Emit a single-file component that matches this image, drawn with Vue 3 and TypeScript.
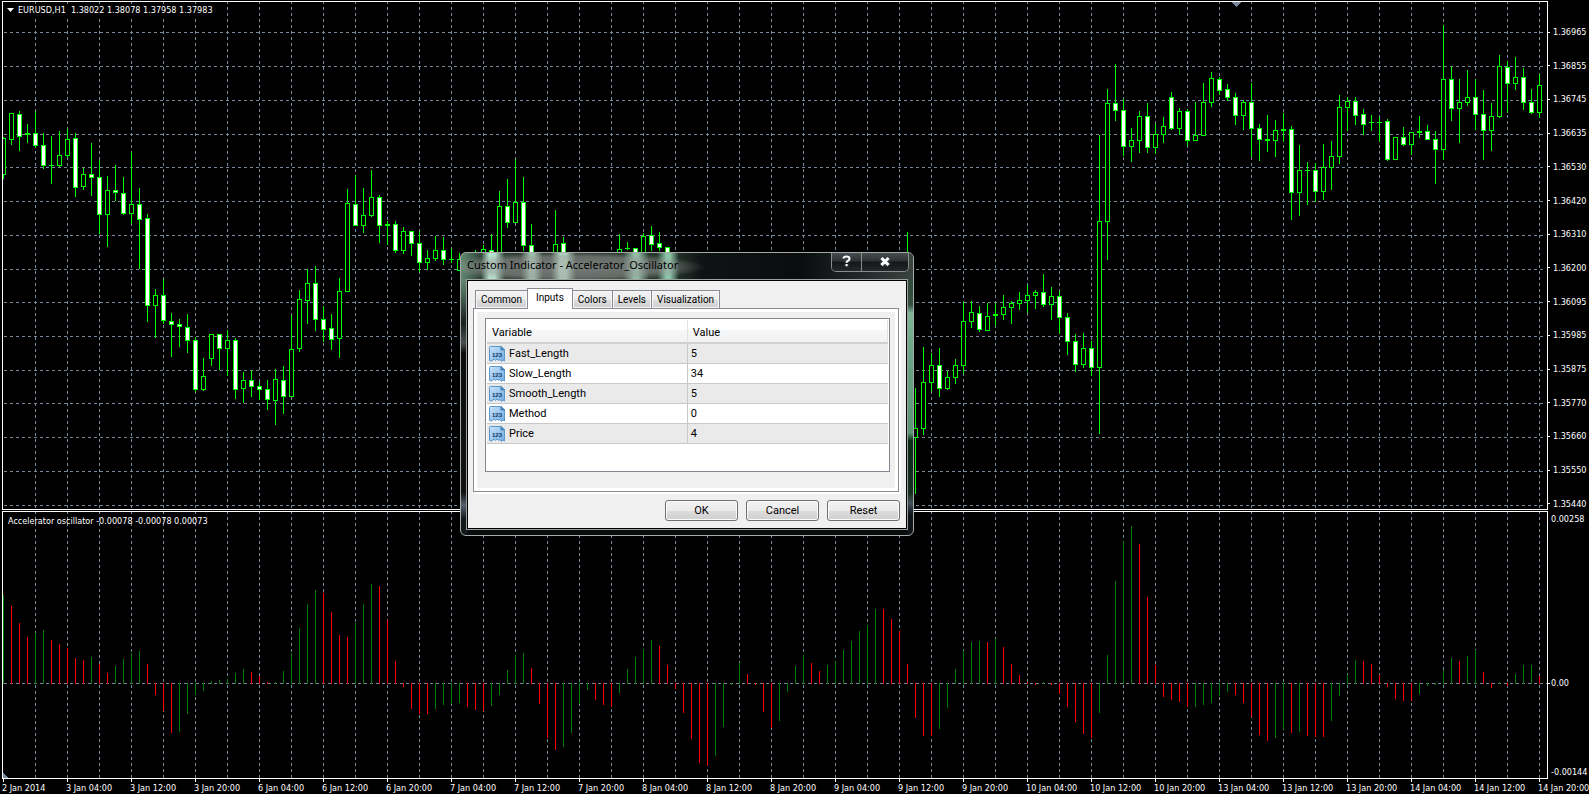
<script setup lang="ts">
import { ref } from 'vue'

type Kind = 'h' | 'w'
interface Candle { x: number; high: number; low: number; top: number; bottom: number; kind: Kind }
interface Bar { x: number; y: number; height: number; up: boolean }

const STEP = 8
const ORIGIN = 3
const ZERO = 683

// index high low bodyTop bodyBottom kind (h = hollow, w = filled)
const candleSource = `
0 137 178 138 174 h;1 113 144 113 139 h;2 111 150 114 136 w;3 124 142 133 134 h;4 111 147 133 145 w;5 133 168 145 165 w
6 136 183 165 165 h;7 131 166 155 165 h;8 129 157 139 155 h;9 133 196 138 187 w;10 168 189 174 186 h;11 143 195 174 177 w
12 160 233 177 214 w;13 176 246 190 214 h;14 165 200 190 192 w;15 177 214 193 213 w;16 152 223 204 213 h;17 188 268 204 219 w
18 214 321 218 305 w;19 289 337 295 305 h;20 279 323 295 320 w;21 313 356 321 324 w;22 319 346 324 326 w;23 314 352 327 340 w
24 337 391 340 389 w;25 358 390 376 389 h;26 334 365 334 358 h;27 334 369 334 348 w;28 330 375 340 348 h;29 338 398 340 389 w
30 372 402 380 388 h;31 370 396 380 386 w;32 382 399 386 389 w;33 380 409 389 399 w;34 369 424 379 400 h;35 366 413 380 396 w
36 315 396 349 396 h;37 290 351 299 348 h;38 269 323 283 300 h;39 266 330 283 319 w;40 306 341 319 329 w;41 314 349 328 339 w
42 278 357 291 338 h;43 189 291 203 291 h;44 175 225 204 225 w;45 188 232 215 225 h;46 170 216 197 215 h;47 195 242 197 225 w
48 221 244 224 225 h;49 221 252 224 250 w;50 227 253 231 250 h;51 231 255 231 243 w;52 231 271 243 262 w;53 250 269 258 262 h
54 236 260 250 258 h;55 237 264 250 259 w;56 249 262 259 259 h;57 253 270 259 270 h;59 250 270 254 266 w;60 245 270 249 262 h
61 234 270 250 264 w;62 191 270 206 266 h;63 179 227 206 222 w;64 159 222 202 222 h;65 177 250 202 245 w;66 224 270 245 262 w
69 210 270 244 262 h;70 237 270 243 268 w;77 234 270 249 262 h;78 242 249 248 248 h;79 248 270 248 266 w;80 233 270 236 260 h
81 226 250 235 244 w;82 232 250 243 247 w;83 247 270 247 268 w;113 232 270 300 400 h;114 388 493 428 437 h;115 347 434 382 428 h
116 353 390 365 382 h;117 348 396 365 388 w;118 371 389 377 388 h;119 359 383 365 377 h;120 302 373 321 365 h;121 301 327 312 321 h
122 306 331 313 329 w;123 303 330 316 330 h;124 303 325 314 315 h;125 295 319 307 314 h;126 301 323 303 307 h;127 292 309 300 303 h
128 285 312 295 300 h;129 290 308 292 295 h;130 274 306 292 304 w;131 287 319 296 304 h;132 291 333 296 317 w;133 313 354 317 341 w
134 334 371 341 364 w;135 333 367 348 364 h;136 341 375 348 367 w;137 135 433 221 367 h;138 89 259 103 221 h;139 64 120 103 110 w
140 99 155 110 146 w;141 128 161 140 146 h;142 111 152 116 140 h;143 103 152 116 147 w;144 124 153 134 147 h;145 117 142 126 134 h
146 92 129 97 128 w;147 108 134 111 128 h;148 109 145 111 140 w;149 102 140 135 140 h;150 83 135 102 135 h;151 72 106 78 102 h
152 77 94 79 90 w;153 84 100 89 97 w;154 93 124 97 115 w;155 100 129 102 115 h;156 83 156 102 128 w;157 124 160 128 139 w
158 115 151 139 140 h;159 120 156 130 140 h;160 113 141 129 130 h;161 126 219 129 192 w;162 145 215 170 192 h;163 162 204 170 170 h
164 163 201 170 191 w;165 144 199 167 191 h;166 141 189 156 167 h;167 95 163 107 156 h;168 97 130 101 107 h;169 97 124 101 115 w
170 109 134 114 124 w;171 115 130 122 122 h;172 117 141 122 122 h;173 119 160 121 159 w;174 137 159 137 159 h;175 127 145 137 144 w
176 132 154 132 144 h;177 116 137 131 132 h;178 125 139 131 139 w;179 131 183 139 149 w;180 25 159 79 149 h;181 66 120 79 108 w
182 79 142 102 108 h;183 70 105 97 102 h;184 79 129 97 114 w;185 90 159 114 130 w;186 103 150 116 130 h;187 55 117 66 116 h
188 61 112 67 83 w;189 57 89 77 83 h;190 68 109 77 102 w;191 89 113 102 112 w;192 74 117 85 112 h`

const candles: Candle[] = candleSource.trim().split(/[;\n]/).map((row) => {
  const [i, high, low, top, bottom, kind] = row.trim().split(' ')
  return { x: ORIGIN + STEP * +i, high: +high, low: +low, top: +top, bottom: +bottom, kind: kind as Kind }
})

// signed bar lengths, one per hour; g = rising, r = falling
const barSource = `
88g 77r 60r 46r 50g 53g 43r 39r 35r 25r 23r 26g 19r 10r 17g 24g 30g 32g 19r -11r -27r -49r -48g -30g -11g -7g 2g 3g 4g 10g 14g 11r
7r 1r 1g 12g 30g 55g 79g 93g 90r 71r 48r 46r 60g 79g 99g 97r 63r 22r -3r -25r -30r -30r -25g -21g -20g -19g -23r -26r -27r -22g -11g
13g 28g 30g 15r -20r -54r -66r -63g -49g -20g -6g -16r -21r -23r -9g 14g 26g 34g 43g 37r 18r -5r -29r -55r -79r -82r -72g -43g -1g
20g 9r -1r -28r -44r -37g -8g 17g 28g 20r 12r 18g 22g 33g 42g 52g 58g 74g 74r 64r 52r 19r -34r -52r -52r -45g -24g 14g 32g 41g 42g
41r 44g 36r 19r 8r 1r -1r 1g -1r -10r -23r -38r -50r -54r -29g 28g 102g 142g 157g 139r 86r 18r -13r -16r -18r -23r -23g -21g -19g
-12g -8g -11r -19r -33r -51r -57r -54g -45g -49r -48g -52r -53r -53r -37g -12g 8g 23g 22r 19r 8r -3r -15r -17r -17r -10g -2g -1g
13g 25g 22r 27g 33g 11r -4r 1g -2r 9g 18g 18g 7r`

const bars: Bar[] = barSource.trim().split(/\s+/).map((token, i) => {
  const value = parseInt(token, 10)
  return {
    x: ORIGIN + STEP * i,
    y: value > 0 ? ZERO - value : ZERO,
    height: Math.abs(value) + 1,
    up: token.endsWith('g'),
  }
})

const columns = Array.from({ length: 48 }, (_, k) => 35 + 32 * k)
const gridRows = [32, 66, 100, 134, 167, 201, 235, 269, 302, 336, 370, 403, 437, 471, 505]
const prices = ['1.36965', '1.36855', '1.36745', '1.36635', '1.36530', '1.36420', '1.36310', '1.36200',
  '1.36095', '1.35985', '1.35875', '1.35770', '1.35660', '1.35550', '1.35440']

const times = ['2 Jan 2014', '3 Jan 04:00', '3 Jan 12:00', '3 Jan 20:00', '6 Jan 04:00', '6 Jan 12:00', '6 Jan 20:00',
  '7 Jan 04:00', '7 Jan 12:00', '7 Jan 20:00', '8 Jan 04:00', '8 Jan 12:00', '8 Jan 20:00', '9 Jan 04:00', '9 Jan 12:00',
  '9 Jan 20:00', '10 Jan 04:00', '10 Jan 12:00', '10 Jan 20:00', '13 Jan 04:00', '13 Jan 12:00', '13 Jan 20:00',
  '14 Jan 04:00', '14 Jan 12:00', '14 Jan 20:00']

const tabs = ['Common', 'Inputs', 'Colors', 'Levels', 'Visualization']
const activeTab = ref('Inputs')
const variables = [
  { name: 'Fast_Length', value: '5' },
  { name: 'Slow_Length', value: '34' },
  { name: 'Smooth_Length', value: '5' },
  { name: 'Method', value: '0' },
  { name: 'Price', value: '4' },
]
</script>

<template>
  <main class="terminal">
    <div class="row">
      <section class="pane" aria-label="EURUSD price chart">
        <svg class="plot price-plot" shape-rendering="crispEdges" aria-hidden="true">
          <g transform="translate(-3 -2)">
            <g>
              <rect v-for="x in columns" :key="'c' + x" :x="x" y="2" width="1" height="507" fill="url(#dash-v)" />
              <rect v-for="y in gridRows" :key="'r' + y" x="4" :y="y" width="1540" height="1" fill="url(#dash-h)" />
            </g>
            <path d="M1232 2h9v1h-1v1h-1v1h-1v1h-1v1h-1v-1h-1v-1h-1v-1h-1v-1h-1z" fill="#778899" />
            <g v-for="c in candles" :key="c.x">
              <rect class="lime" :x="c.x" :y="c.high" width="1" :height="c.low - c.high + 1" />
              <rect class="lime" :x="c.x - 2" :y="c.top" width="5" :height="c.bottom - c.top + 1" />
              <rect
                v-if="c.bottom - c.top > 1"
                :class="c.kind === 'w' ? 'solid' : 'hollow'"
                :x="c.x - 1" :y="c.top + 1" width="3" :height="c.bottom - c.top - 1"
              />
            </g>
          </g>
          <defs>
            <pattern id="dash-v" width="6" height="6" patternUnits="userSpaceOnUse" y="1">
              <rect width="6" height="3" fill="#778899" />
            </pattern>
            <pattern id="dash-h" width="6" height="6" patternUnits="userSpaceOnUse" x="4">
              <rect width="3" height="6" fill="#778899" />
            </pattern>
          </defs>
        </svg>
        <h1 class="caption">
          <svg width="7" height="4" viewBox="0 0 7 4" aria-hidden="true"><path d="M0 0h7L3.500 4z" fill="#fff" /></svg>
          <span>EURUSD,H1&nbsp; 1.38022 1.38078 1.37958 1.37983</span>
        </h1>
      </section>
      <div class="axis price-axis">
        <span v-for="p in prices" :key="p">{{ p }}</span>
      </div>
    </div>

    <div class="row">
      <section class="pane" aria-label="Accelerator oscillator">
        <svg class="plot osc-plot" shape-rendering="crispEdges" aria-hidden="true">
          <g transform="translate(-3 -512)">
            <rect v-for="x in columns" :key="x" :x="x" y="512" width="1" height="266" fill="url(#dash-v)" />
            <rect x="4" y="683" width="1544" height="1" fill="url(#dash-h)" />
            <rect v-for="b in bars" :key="b.x" :class="b.up ? 'up' : 'down'" :x="b.x" :y="b.y" width="1" :height="b.height" />
            <path d="M3 773l5 5h-5z" fill="#778899" />
          </g>
        </svg>
        <h2 class="caption osc-caption">Accelerator oscillator -0.00078 -0.00078 0.00073</h2>
      </section>
      <div class="axis osc-axis">
        <span>0.00258</span>
        <i class="gap-upper"></i>
        <span class="zero">0.00</span>
        <i class="gap-lower"></i>
        <span>-0.00144</span>
      </div>
    </div>

    <div class="times">
      <span v-for="t in times" :key="t">{{ t }}</span>
    </div>

    <div class="dialog" role="dialog" aria-labelledby="dialog-title">
      <header class="titlebar">
        <h2 id="dialog-title">Custom Indicator - Accelerator_Oscillator</h2>
        <div class="window-buttons">
          <button type="button" class="help" aria-label="Help">
            <svg width="9" height="12" viewBox="0 0 9 12" aria-hidden="true">
              <path d="M1.500 3.500Q1.500 1.500 4.500 1.500T7.500 3.800Q7.500 5 5.800 5.900Q4.600 6.500 4.600 7.700M4.600 9v2.200" stroke="#3a4048" stroke-width="4" fill="none" />
              <path d="M1.500 3.500Q1.500 1.500 4.500 1.500T7.500 3.800Q7.500 5 5.800 5.900Q4.600 6.500 4.600 7.700M4.600 9v2.200" stroke="#fff" stroke-width="2" fill="none" />
            </svg>
          </button>
          <button type="button" class="close" aria-label="Close">
            <svg width="12" height="11" viewBox="0 0 12 11" aria-hidden="true">
              <path d="M2 1.500L10 9.500M10 1.500L2 9.500" stroke="#3a4048" stroke-width="5" />
              <path d="M2.500 2L9.500 9M9.500 2L2.500 9" stroke="#fff" stroke-width="3" />
            </svg>
          </button>
        </div>
      </header>

      <div class="client">
        <div class="tabs" role="tablist">
          <button
            v-for="t in tabs" :key="t" type="button" role="tab"
            :aria-selected="t === activeTab" :class="{ active: t === activeTab }" @click="activeTab = t"
          >{{ t }}</button>
        </div>
        <div class="sheet" role="tabpanel">
          <div class="list">
            <table>
              <thead>
                <tr><th scope="col">Variable</th><th scope="col">Value</th></tr>
              </thead>
              <tbody>
                <tr v-for="v in variables" :key="v.name">
                  <td>
                    <div class="name">
                      <svg width="16" height="16" viewBox="0 0 16 16" aria-hidden="true">
                        <path d="M.5 1.500Q.5.500 1.500.500H12L15.500 4V15L14 14L12.500 15.500L11 13.500L9.500 14.500L8 13L6.500 14.500L5 13L3.500 14.500L2 15L.5 14.500z" fill="url(#sheet-blue)" stroke="#5c97c9" />
                        <path d="M12 .5V4h3.500z" fill="#5b95c8" stroke="#3f7cb3" />
                        <text x="8" y="11" text-anchor="middle" class="digits">123</text>
                      </svg>
                      <span>{{ v.name }}</span>
                    </div>
                  </td>
                  <td>{{ v.value }}</td>
                </tr>
              </tbody>
            </table>
            <svg class="defs" width="0" height="0" aria-hidden="true">
              <linearGradient id="sheet-blue" x1="0" y1="0" x2="1" y2="1">
                <stop offset="0" stop-color="#cbe6ff" />
                <stop offset="1" stop-color="#6faade" />
              </linearGradient>
            </svg>
          </div>
        </div>
        <footer class="actions">
          <button type="button">OK</button>
          <button type="button">Cancel</button>
          <button type="button">Reset</button>
        </footer>
      </div>
    </div>
  </main>
</template>

<style>
body {
  margin: 0;
  background: #000;
}
</style>

<style scoped>
.terminal {
  position: relative;
  display: flex;
  flex-direction: column;
  gap: 1px;
  min-height: 100vh;
  padding-top: 1px;
  box-sizing: border-box;
  overflow: hidden;
  background: #000;
  color: #fff;
  font: 9px/12px "DejaVu Sans Condensed", "Noto Sans", sans-serif;
}
.row {
  display: flex;
}
.pane {
  position: relative;
  flex: 1;
  min-width: 0;
  margin-left: 2px;
  border: 1px solid #fff;
}
.plot {
  display: block;
  width: 100%;
}
.price-plot { height: 507px; }
.osc-plot { height: 266px; }
.lime { fill: #00ff00; }
.solid { fill: #fff; }
.hollow { fill: #000; }
.up { fill: #008000; }
.down { fill: #ff0000; }

.caption {
  position: absolute;
  top: 2px;
  left: 4px;
  display: flex;
  align-items: center;
  gap: 4px;
  margin: 0;
  background: #000;
  font-size: 9px;
  line-height: 12px;
  font-weight: 400;
  white-space: pre;
}
.osc-caption {
  top: 3px;
  left: 5px;
  background: none;
}

.axis {
  display: flex;
  flex-direction: column;
  box-sizing: border-box;
  width: 41px;
}
.axis span {
  display: flex;
  align-items: center;
  height: 12px;
  white-space: nowrap;
}
.price-axis {
  justify-content: space-between;
  padding: 25px 0 0;
}
.price-axis span::before,
.osc-axis .zero::before {
  content: "";
  width: 2px;
  height: 1px;
  margin-right: 3px;
  background: #fff;
}
.osc-axis {
  padding: 2px 0 1px 3px;
}
.osc-axis .zero::before {
  margin: 0 1px 0 -3px;
}
.gap-upper { flex: 152; }
.gap-lower { flex: 77; }

.times {
  display: flex;
  height: 15px;
  margin: -1px 0 0 2px;
  overflow: hidden;
}
.times span {
  position: relative;
  flex: none;
  width: 64px;
  padding-top: 3px;
  box-sizing: border-box;
  white-space: nowrap;
}
.times span::before {
  content: "";
  position: absolute;
  top: 0;
  left: 1px;
  width: 1px;
  height: 3px;
  background: #fff;
}

.dialog {
  position: absolute;
  left: 460px;
  top: 252px;
  display: flex;
  flex-direction: column;
  box-sizing: border-box;
  width: 454px;
  padding: 0 5px 5px;
  border: 1px solid #a3aaa8;
  border-radius: 6px;
  background:
    linear-gradient(#2d4536 0, #34503f 52px, #82b598 60px, #6da386 100px, #5a9576 180px, #0b2b14 188px, #16301f 240px, #46525e 250px, #101416 262px) right / 6px 100% no-repeat,
    linear-gradient(#8fb5a0 0, #4c6b58 40px, #1b1e20 70px, #4a4d50 90px, #0c0d0e 100px, #101214 240px, #56626e 252px, #14181a 266px) left / 6px 100% no-repeat,
    #0a0c0d;
  color: #000;
  font: 11px/14px Roboto, "Liberation Sans", sans-serif;
}
.titlebar {
  display: flex;
  justify-content: space-between;
  height: 26px;
  margin: 0 -5px;
  padding-left: 6px;
  border-radius: 5px 5px 0 0;
  background:
    radial-gradient(ellipse 132px 15px at 112px 14px, #a8a8a899 0, #9a9a9a88 70%, transparent 100%),
    linear-gradient(90deg, #7fb59399 0, transparent 20px, #b7e3cd 28px, #b7e3cd 34px, transparent 44px, transparent 60px, #9fc4b0 69px, #9fc4b0 73px, transparent 82px, transparent 90px, #b4e0c9 99px, #b4e0c9 105px, transparent 115px, transparent 162px, #8fc0a4 173px, #8fc0a4 177px, transparent 188px, transparent 196px, #8cc4a8 205px, #8cc4a8 209px, transparent 218px),
    linear-gradient(90deg, #33473b 0, #2c3830 60px, #25372c 210px, #101314 240px, #0a0c0d 340px, #22282a 400px, #3c4540 454px);
}
.titlebar h2 {
  margin: 4px 0 0;
  font: 400 11px/16px "Noto Sans", "Open Sans", sans-serif;
  white-space: nowrap;
}
.window-buttons {
  display: flex;
  height: 18px;
  margin-right: 4px;
  border: 1px solid #878c8c;
  border-top: 0;
  border-radius: 0 0 5px 5px;
}
.window-buttons button {
  display: flex;
  align-items: center;
  justify-content: center;
  padding: 0 0 2px;
  border: 0;
  background: linear-gradient(#4a4d4f 0, #2e3133 45%, #141617 50%, #24282a 100%);
}
.window-buttons .help {
  width: 30px;
  border-right: 1px solid #878c8c;
  border-radius: 0 0 0 4px;
}
.window-buttons .close {
  width: 46px;
  border-radius: 0 0 4px 0;
}
.client {
  padding: 8px 7px 8px 6px;
  border: 1px solid #000;
  outline: 1px solid #9ba1a0;
  outline-offset: -1px;
  box-shadow: inset 0 0 0 1px #000;
  background: #f0f0f0;
}
.tabs {
  display: flex;
  align-items: flex-end;
  padding-left: 2px;
  height: 20px;
  font-size: 10px;
}
.tabs button {
  height: 18px;
  padding: 0 5px;
  border: 1px solid #898c95;
  border-bottom: 0;
  border-left-width: 0;
  background: linear-gradient(#f2f2f2 0, #ebebeb 50%, #dddddd 51%, #cfcfcf 100%);
  box-shadow: inset 0 0 0 1px #f6f6f6;
  color: #000;
  font: inherit;
}
.tabs button:first-child {
  border-left-width: 1px;
}
.tabs button.active {
  z-index: 1;
  height: 21px;
  margin: 0 0 -1px -1px;
  padding: 0 8px 2px;
  border-left-width: 1px;
  background: #fff;
  box-shadow: none;
}
.sheet {
  height: 184px;
  box-sizing: border-box;
  margin-right: 1px;
  padding: 9px 8px 19px 11px;
  border: 1px solid #898c95;
  box-shadow: inset 0 0 0 3px #fff, 2px 2px 0 #fff;
}
.list {
  height: 154px;
  box-sizing: border-box;
  padding: 1px;
  border: 1px solid #828790;
  background: #fff;
}
table {
  width: 100%;
  border-collapse: collapse;
  table-layout: fixed;
}
th {
  height: 23px;
  box-sizing: border-box;
  padding: 3px 0 0 5px;
  border-right: 1px solid #e0e2e4;
  border-bottom: 1px solid #d5d5d5;
  background: linear-gradient(#fff 45%, #f5f6f8 46%, #f1f2f4 100%);
  font-weight: 400;
  text-align: left;
}
tbody tr:first-child td {
  border-top: 2px solid #d0d0d0;
}
td {
  height: 18px;
  padding: 1px 0 0 3px;
  border-bottom: 1px solid #c8c8c8;
}
td:first-child {
  padding-left: 2px;
  border-right: 1px solid #c8c8c8;
}
tbody tr:nth-child(odd) {
  background: #eaeaea;
}
.name {
  display: flex;
  align-items: center;
  gap: 4px;
}
.digits {
  fill: #0d3460;
  font: 700 6px "Liberation Sans", sans-serif;
}
.defs {
  display: block;
}
.actions {
  display: flex;
  justify-content: flex-end;
  gap: 8px;
  padding-top: 8px;
}
.actions button {
  width: 73px;
  height: 21px;
  padding: 0;
  border: 1px solid #707070;
  border-radius: 3px;
  background: linear-gradient(#f2f2f2 0, #ebebeb 50%, #dddddd 51%, #cfcfcf 100%);
  box-shadow: inset 0 0 0 1px #fbfbfb;
  color: #000;
  font: inherit;
}
</style>
